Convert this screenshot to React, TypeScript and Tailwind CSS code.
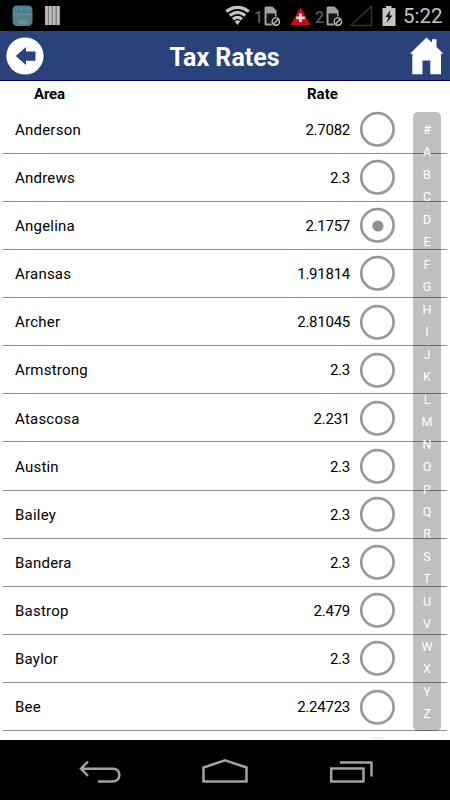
import React, { useState } from 'react';

interface TaxRate {
  area: string;
  rate: string;
}

const taxRates: TaxRate[] = [
  { area: 'Anderson', rate: '2.7082' },
  { area: 'Andrews', rate: '2.3' },
  { area: 'Angelina', rate: '2.1757' },
  { area: 'Aransas', rate: '1.91814' },
  { area: 'Archer', rate: '2.81045' },
  { area: 'Armstrong', rate: '2.3' },
  { area: 'Atascosa', rate: '2.231' },
  { area: 'Austin', rate: '2.3' },
  { area: 'Bailey', rate: '2.3' },
  { area: 'Bandera', rate: '2.3' },
  { area: 'Bastrop', rate: '2.479' },
  { area: 'Baylor', rate: '2.3' },
  { area: 'Bee', rate: '2.24723' },
];

const indexLetters = '#ABCDEFGHIJKLMNOPQRSTUVWXYZ'.split('');

function SimIcon() {
  return (
    <svg className="shrink-0" width="18" height="22" viewBox="0 0 18 22" fill="none">
      <path d="M0.5 3Q0.5 1.5 2 1.5H8.5L12.5 5.5V20.5H2Q0.5 20.5 0.5 19Z" fill="#a0a0a0" />
      <path d="M2.5 8.5H11V18.5H2.5Z" fill="#151515" />
      <circle cx="11.8" cy="16.6" r="5" fill="#000" />
      <circle cx="11.8" cy="16.6" r="3.7" stroke="#c4c4c4" strokeWidth="1.4" />
      <path d="M9.2 19.2L14.4 14" stroke="#c4c4c4" strokeWidth="1.4" />
    </svg>
  );
}

function StatusBar() {
  return (
    <div className="flex h-[31px] shrink-0 items-center bg-black">
      <svg className="ml-3 shrink-0" width="22" height="22" viewBox="0 0 22 22">
        <rect x="0.5" y="0.5" width="20" height="20.5" rx="4.5" fill="#587f8d" />
        <path d="M1 7V5Q1 1 5 1H16Q20 1 20 5V7Z" fill="#4a7f9c" />
        <path d="M4 3L6 5M9 2L10 5M14 3V5M17 3V5" stroke="#79a5c0" />
        <path d="M1 9Q10 11 20 9" stroke="#7a9ca5" fill="none" />
        <ellipse cx="11" cy="17" rx="5" ry="2.5" fill="#6b929f" />
      </svg>
      <svg className="ml-[11px] shrink-0" width="15" height="20" viewBox="0 0 15 20">
        <path d="M0 0H15V19H0Z" fill="#777" />
        <path d="M1.5 0V19M5.3 0V19M9.2 0V19M13.2 0V19" stroke="#bcbcbc" strokeWidth="2.7" />
      </svg>
      <svg className="ml-[165px] shrink-0" width="25" height="22" viewBox="0 0 25 22" fill="none" stroke="#c4c4c4" strokeWidth="3.2">
        <path d="M1.2 6.5Q12.5 -1.8 23.8 6.5" />
        <path d="M4.7 10.5Q12.5 4.2 20.3 10.5" />
        <path d="M8 14.3Q12.5 10.5 17 14.3" />
        <path d="M9.6 16.3Q12.5 14.2 15.4 16.3L12.5 20Z" fill="#c4c4c4" stroke="none" />
      </svg>
      <span className="ml-[4px] mt-1 w-[10px] text-[16px] font-medium leading-5 text-[#5c5c5c]">1</span>
      <SimIcon />
      <svg className="ml-[8px] shrink-0" width="21" height="20" viewBox="0 0 21 20">
        <path d="M10.5 1L20.5 19H0.5Z" fill="#c40c18" />
        <path d="M10.5 7.5V16M6.2 11.8H14.8" stroke="#ddd" strokeWidth="2.8" />
      </svg>
      <span className="ml-[4px] mt-1 w-[11px] text-[16px] font-medium leading-5 text-[#5c5c5c]">2</span>
      <SimIcon />
      <svg className="ml-[5px] shrink-0" width="24" height="22" viewBox="0 0 24 22" fill="none">
        <path d="M2 20.5L22.5 1V20.5Z" stroke="#333" strokeWidth="1.4" />
      </svg>
      <svg className="ml-[9px] shrink-0" width="14" height="22" viewBox="0 0 14 22">
        <path d="M4 1H9.5V3H13.5V21H0.5V3H4Z" fill="#c4c4c4" />
        <path d="M8.5 5L3.5 12H6.5L4.5 18L10.5 10.5H7.5Z" fill="#111" />
      </svg>
      <span className="ml-[7px] text-[20.5px] leading-6 text-[#c4c4c4]">5:22</span>
    </div>
  );
}

function Header() {
  return (
    <header className="flex h-[50px] shrink-0 items-center justify-between border-b border-[#000070] bg-[#294279] pl-[6px] pr-[6px]">
      <button aria-label="Back">
        <svg width="38" height="38" viewBox="0 0 38 38">
          <circle cx="19" cy="19" r="18.6" fill="#fff" />
          <path d="M9.8 19L20 10V14.5H29.5V23.7H20V28Z" fill="#294279" />
        </svg>
      </button>
      <h1 className="mr-[5px] pt-1 text-[25px] font-bold leading-8 text-white">Tax Rates</h1>
      <button aria-label="Home">
        <svg width="34" height="38" viewBox="0 0 34 38">
          <path d="M16.5 0.5L22 5.5V2.2H26.5V10L33.5 16.8H31V37.3H20.3V23.5H12.5V37.3H2.3V16.8H0Z" fill="#fff" />
        </svg>
      </button>
    </header>
  );
}

interface RateRowProps {
  item: TaxRate;
  selected: boolean;
  onSelect: () => void;
}

function RateRow({ item, selected, onSelect }: RateRowProps) {
  return (
    <div
      className="mx-[3px] flex h-[48.125px] shrink-0 cursor-pointer items-center border-b border-[#8e8e8e] pl-3 pr-[52px] text-[15px] text-black"
      onClick={onSelect}
    >
      <span className="flex-1 pt-[2px] tracking-[0.22px]">{item.area}</span>
      <span className="pt-[2px] tracking-[-0.25px]">{item.rate}</span>
      <svg className="ml-[9px]" width="36" height="36" viewBox="0 0 36 36">
        <circle cx="18.4" cy="18.3" r="16.2" fill="#fff" stroke="#979b9b" strokeWidth="2.7" />
        {selected && <circle cx="18.9" cy="19" r="5.6" fill="#8c9292" />}
      </svg>
    </div>
  );
}

function NavigationBar() {
  return (
    <nav className="flex h-[60px] shrink-0 items-center bg-black">
      <svg width="450" height="60" viewBox="0 0 450 60" fill="none" stroke="#a2a2a2" strokeWidth="2.5">
        <path d="M88 21.5L81 28.7L88 36M81 28.7H113C121.5 28.7 121.5 41.5 113 41.5H98" />
        <path d="M203.5 41.5V27.5L225 20.3L246.5 27.5V41.5Z" />
        <path d="M331.2 28.5H363.5V41.5H331.2Z" />
        <path d="M340 22.5H371.5V36.5" />
      </svg>
    </nav>
  );
}

export default function App() {
  const [selectedArea, setSelectedArea] = useState('Angelina');

  return (
    <div className="flex h-[800px] w-[450px] flex-col overflow-hidden bg-white font-['Roboto',sans-serif]">
      <StatusBar />
      <Header />
      <main className="relative flex min-h-0 flex-1 flex-col overflow-hidden">
        <div className="flex h-[24.5px] shrink-0 items-center pl-[34px] pt-[1px] text-[15px] font-bold text-black">
          <span className="w-[273px] tracking-[-0.2px]">Area</span>
          <span>Rate</span>
        </div>
        {taxRates.map((item) => (
          <RateRow
            key={item.area}
            item={item}
            selected={item.area === selectedArea}
            onSelect={() => setSelectedArea(item.area)}
          />
        ))}
        <div className="ml-[371px] mt-[6px] h-[2px] w-[13px] shrink-0 rounded-full bg-[#eeeeee]" />
        <div className="absolute right-[9px] top-[31px] flex h-[619px] w-7 flex-col items-center rounded-[5px] bg-black/25 pt-[7px] text-[12.5px] text-white">
          {indexLetters.map((letter) => (
            <span key={letter} className="h-[22.48px] shrink-0 leading-[22.48px]">{letter}</span>
          ))}
        </div>
      </main>
      <NavigationBar />
    </div>
  );
}
